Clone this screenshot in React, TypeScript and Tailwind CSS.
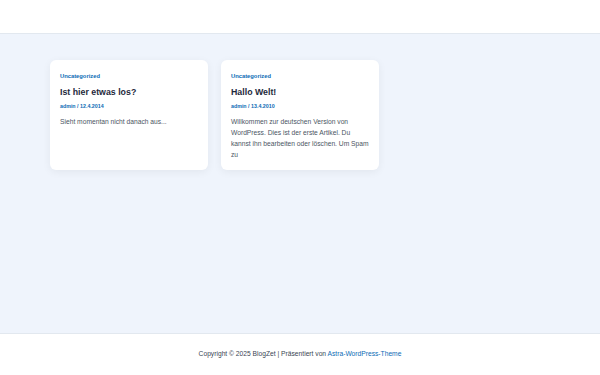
const POSTS = [
  {
    id: 1,
    category: 'Uncategorized',
    title: 'Ist hier etwas los?',
    meta: 'admin / 12.4.2014',
    excerpt: 'Sieht momentan nicht danach aus...',
  },
  {
    id: 2,
    category: 'Uncategorized',
    title: 'Hallo Welt!',
    meta: 'admin / 13.4.2010',
    excerpt: 'Willkommen zur deutschen Version von WordPress. Dies ist der erste Artikel. Du kannst ihn bearbeiten oder löschen. Um Spam zu',
  },
];

export default function App() {
  return (
    <div className="flex h-[375px] w-[600px] flex-col bg-[#eff4fc] font-['Liberation_Sans',Arial,sans-serif]">
      <header className="h-[34px] shrink-0 border-b border-[#e2e8ef] bg-white" />

      <main className="flex-1 px-[50px] pt-[26px]">
        <div className="grid grid-cols-3 gap-[13px]">
          {POSTS.map(post => (
            <article key={post.id} className="h-[110px] rounded-md bg-white pl-[10px] pr-[8px] pt-[12px] shadow-[0_2px_8px_rgba(0,0,0,0.06)]">
              <div className="text-[5.8px] font-bold leading-[8px] text-[#0b6bb5]">{post.category}</div>
              <h2 className="mt-[7px] text-[8.8px] font-bold leading-[10px] text-[#1e293b]">{post.title}</h2>
              <div className="mt-[5px] text-[5.3px] font-bold leading-[8px] text-[#0b6bb5]">{post.meta}</div>
              <p className="mt-[6px] text-[6.7px] leading-[11px] text-[#4b5563]">{post.excerpt}</p>
            </article>
          ))}
        </div>
      </main>

      <footer className="flex h-[42px] shrink-0 items-center justify-center border-t border-[#e2e8ef] bg-white text-[6.7px] text-[#3a4553]">
        <span>
          Copyright © 2025 BlogZet | Präsentiert von <span className="text-[#0b6bb5]">Astra-WordPress-Theme</span>
        </span>
      </footer>
    </div>
  );
}
